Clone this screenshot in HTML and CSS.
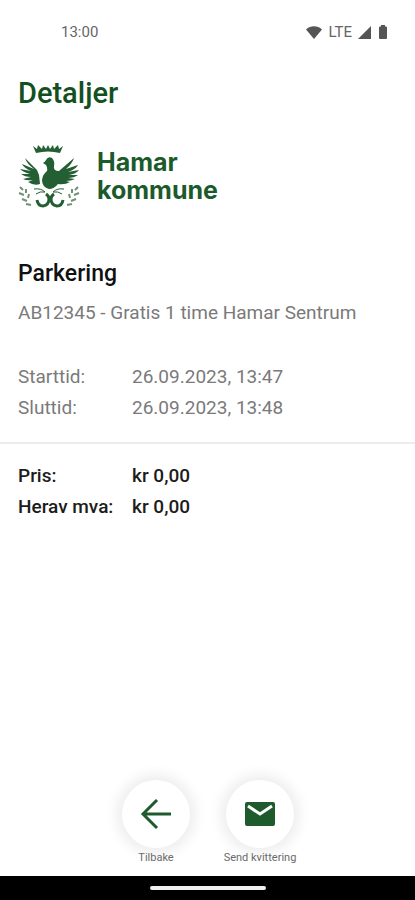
FILE: index.html
```
<!DOCTYPE html>
<html lang="no">
	<head>
		<meta charset="UTF-8">
		<meta name="viewport" content="width=device-width, initial-scale=1">
		<title>Detaljer</title>
		<link rel="stylesheet" href="styles.css">
	</head>
	<body>
		<div class="status">
			<span>13:00</span>
			<div class="status-icons">
				<svg width="16" height="13" viewBox="0 0 16 13"><path d="M0 3.500C4.500-.9 11.500-.9 16 3.500L8 13z"/></svg>
				<span>LTE</span>
				<svg width="13" height="13" viewBox="0 0 13 13"><path d="M13 0v13H0z"/></svg>
				<svg class="battery" width="8" height="14" viewBox="0 0 8 14"><path d="M2 0h4v1.500H7q1 0 1 1V13q0 1-1 1H1q-1 0-1-1V2.500q0-1 1-1h1z"/></svg>
			</div>
		</div>
		<main class="content">
			<h1>Detaljer</h1>
			<div class="logo">
				<svg width="62" height="66" viewBox="0 0 62 66">
					<!-- crown -->
					<path d="M15 3l4 3 1-4 4 4 1-4 3 4 2-4 2 4 3-4 1 4 4-4 1 4 4-3-3 7q-12-3-24 0z"/>
					<!-- left wing -->
					<path d="M7 15l12 12 2 5 1 9q-6 2-12-2l5-2q-6 1-10-1l8-2q-6 0-10-3l9 0q-7-2-10-5l11 2Q6 25 4 21l12 5Q9 21 7 15z"/>
					<!-- body and right wing -->
					<path d="M25 20q2-1 3-3 2-4 6-2 3 3 2 8-1 5 5 5L56 15q-2 6-8 11l12-4q-2 4-10 7l11-2q-3 4-10 5l9 0q-4 3-10 3l7 1q-4 2-9 2l4 1q-5 3-12 2-4 5-9 5-7-2-7-9 0-4 3-7 4-3 1-8z"/>
					<!-- tail -->
					<path class="line" d="M16 46q7-1 11 3M18 51q4-3 9-2M46 46q-7-1-11 3M44 51q-4-3-9-2"/>
					<path class="curl" d="M19 57q1 6 6 6 6-1 6-7 0-3-3-5M45 57q-1 6-6 6-6-1-6-7 0-3 3-5"/>
					<!-- branches -->
					<path class="twig" d="M2 44l3 3M1 50l5 2M4 56l5 2M8 61l5 1M8 46l0 4M11 51l-1 4M60 44l-3 3M61 50l-5 2M58 56l-5 2M54 61l-5 1M54 46l0 4M51 51l1 4"/>
				</svg>
				<p class="logo-name">Hamar<br>kommune</p>
			</div>
			<h2>Parkering</h2>
			<p class="place">AB12345 - Gratis 1 time Hamar Sentrum</p>
			<dl class="rows">
				<dt>Starttid:</dt>
				<dd>26.09.2023, 13:47</dd>
				<dt>Sluttid:</dt>
				<dd>26.09.2023, 13:48</dd>
			</dl>
			<dl class="rows price">
				<dt>Pris:</dt>
				<dd>kr 0,00</dd>
				<dt>Herav mva:</dt>
				<dd>kr 0,00</dd>
			</dl>
		</main>
		<div class="actions">
			<button class="action" type="button">
				<span class="circle">
					<svg width="32" height="32" viewBox="0 0 32 32"><path class="arrow" d="M31 16H3M17 2L3 16l14 14"/></svg>
				</span>
				Tilbake
			</button>
			<button class="action" type="button">
				<span class="circle">
					<svg width="30" height="24" viewBox="0 0 30 24"><path d="M2 0h26q2 0 2 2v20q0 2-2 2H2q-2 0-2-2V2q0-2 2-2z"/><path class="flap" d="M3 4l12 8 12-8"/></svg>
				</span>
				Send kvittering
			</button>
		</div>
		<div class="navbar"><span></span></div>
	</body>
</html>
```
FILE: styles.css
```
*{
	box-sizing: border-box;
}
body{
	margin: 0;
	min-height: 100vh;
	display: flex;
	flex-direction: column;
	background: #fff;
	color: #7a7a7a;
	font: 19px/31px Roboto, sans-serif;
}
h1, h2, p, dl, dd{
	margin: 0;
}
.status{
	display: flex;
	justify-content: space-between;
	padding: 20px 28px 0 61px;
	font-size: 15px;
	line-height: 24px;
	color: #666;
}
.status-icons{
	display: flex;
	align-items: center;
	gap: 6px;
}
.status-icons svg{
	fill: #555;
}
.status-icons .battery{
	margin-left: 2px;
}
.content{
	flex: 1;
}
h1{
	padding: 32px 18px 0;
	font-size: 29px;
	line-height: 34px;
	font-weight: 500;
	color: #12501f;
}
.logo{
	display: flex;
	align-items: center;
	gap: 17px;
	padding: 33px 18px 0;
}
.logo svg{
	fill: #235f33;
}
.logo .line,
.logo .curl,
.logo .twig{
	fill: none;
	stroke: #235f33;
	stroke-width: 1;
}
.logo .curl{
	stroke-width: 3;
}
.logo .twig{
	stroke: #6f9278;
	stroke-width: 2;
}
.logo-name{
	font: bold 25px/28px Inter, sans-serif;
	color: #1b5a2b;
}
h2{
	padding: 49px 18px 0;
	font-size: 23px;
	line-height: 32px;
	font-weight: 500;
	color: #111;
}
.place{
	padding: 7px 18px 0;
}
.rows{
	display: grid;
	grid-template-columns: 98px 1fr;
	column-gap: 16px;
	padding: 33px 18px 19px;
}
.price{
	padding-top: 16px;
	border-top: 2px solid #ececec;
	font-weight: 500;
	color: #1c1c1c;
}
.actions{
	display: flex;
	justify-content: center;
	gap: 24px;
	padding: 0 0 11px 1px;
}
.action{
	display: flex;
	flex-direction: column;
	align-items: center;
	gap: 3px;
	width: 80px;
	padding: 0;
	border: 0;
	background: none;
	font: 11px/14px Roboto, sans-serif;
	color: #6a6a6a;
	white-space: nowrap;
	cursor: pointer;
}
.circle{
	display: flex;
	align-items: center;
	justify-content: center;
	width: 68px;
	height: 68px;
	border-radius: 50%;
	background: #fff;
	box-shadow: 0 0 14px 5px rgba(0, 0, 0, .08);
}
.circle svg{
	fill: #1f5a2d;
}
.circle .arrow{
	fill: none;
	stroke: #1f5a2d;
	stroke-width: 3;
}
.circle .flap{
	fill: none;
	stroke: #fff;
	stroke-width: 3;
}
.navbar{
	display: flex;
	align-items: center;
	justify-content: center;
	height: 24px;
	background: #000;
}
.navbar span{
	width: 116px;
	height: 4px;
	border-radius: 2px;
	background: #f0f0f0;
}
```
